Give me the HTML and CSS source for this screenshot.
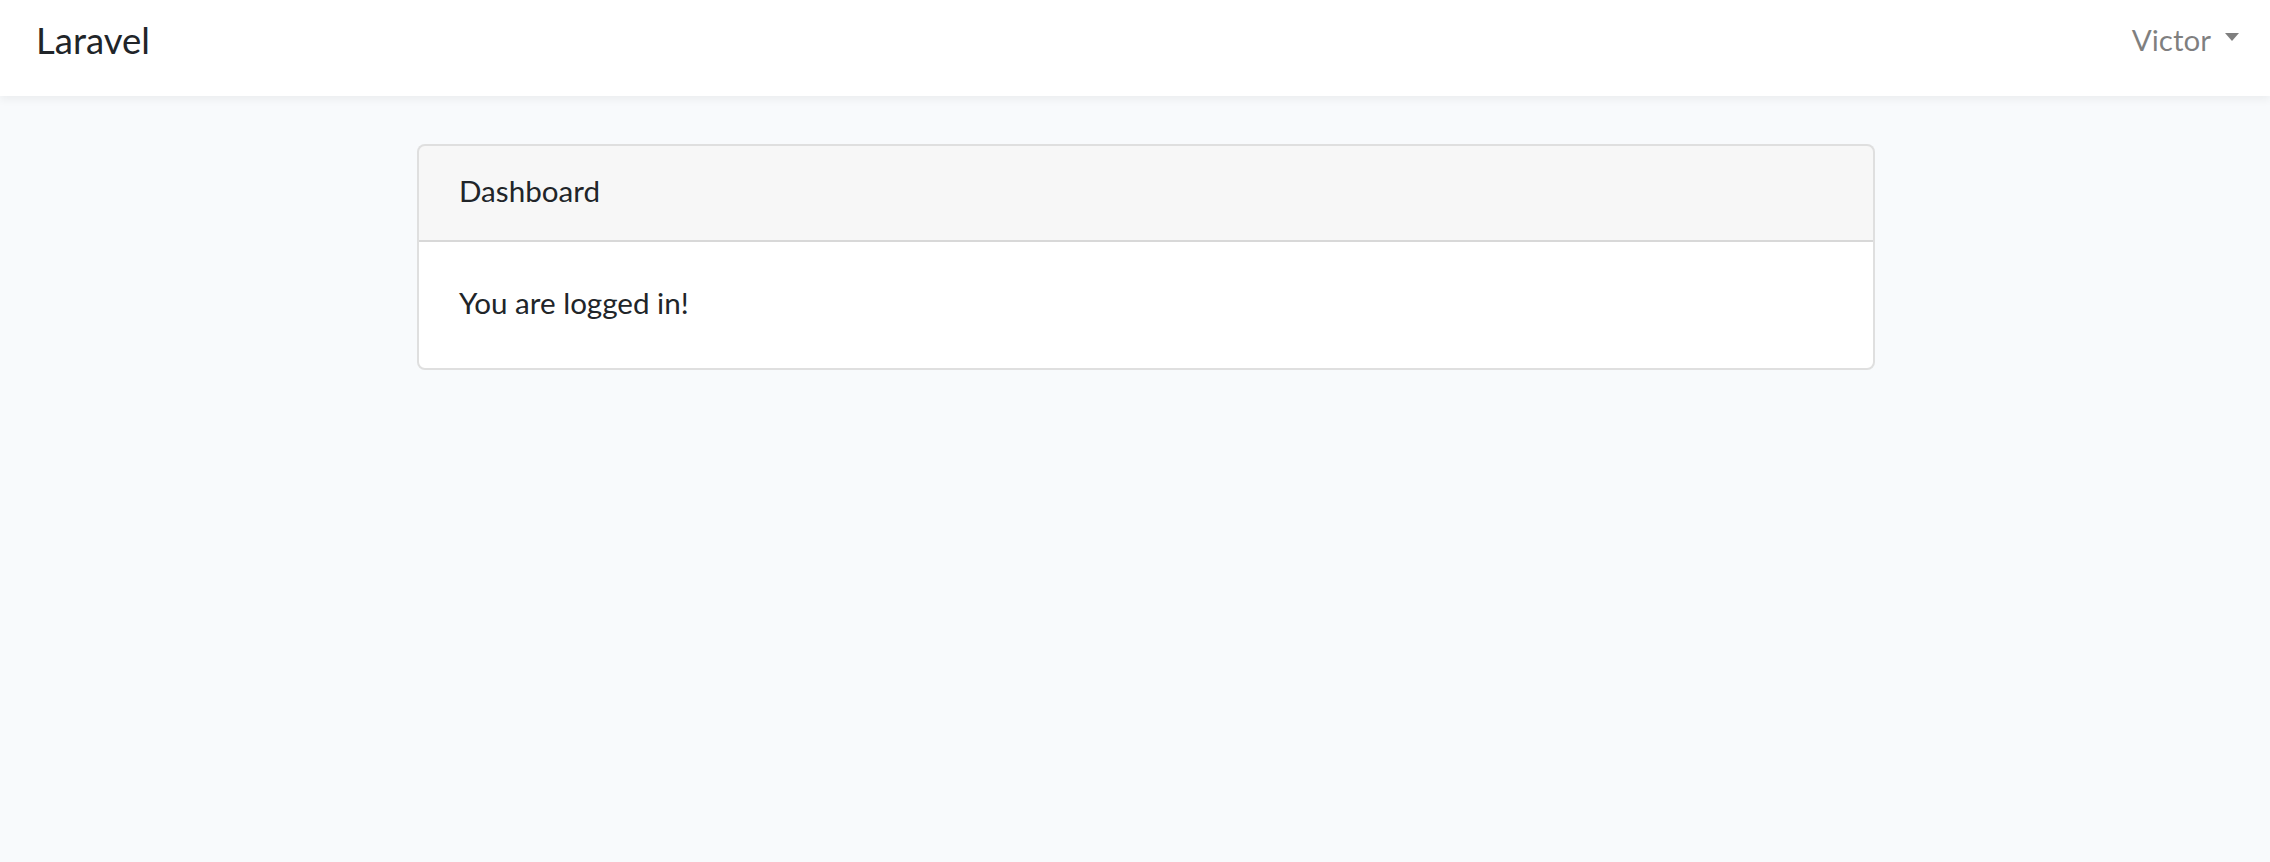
FILE: index.html
```html
<!DOCTYPE html>
<html>
<head>
<meta charset="utf-8">
<link rel="stylesheet" href="styles.css">
</head>
<body>
<nav class="navbar">
  <a class="brand">Laravel</a>
  <a class="user">Victor <span class="caret"></span></a>
</nav>
<main class="main">
  <div class="card">
    <div class="card-header">Dashboard</div>
    <div class="card-body">You are logged in!</div>
  </div>
</main>
</body>
</html>
```

FILE: styles.css
```css
html, body {
  margin: 0;
  padding: 0;
}
body {
  background: #f8fafc;
  font-family: "Lato", "Noto Sans", sans-serif;
  color: #212529;
  font-size: 29.6px;
  line-height: 46px;
}
.navbar {
  height: 96px;
  box-sizing: border-box;
  background: #fff;
  box-shadow: 0 4px 8px rgba(0, 0, 0, 0.05);
  display: flex;
  align-items: center;
  justify-content: space-between;
  padding: 0 31px 0 36px;
}
.brand {
  font-size: 36.5px;
  color: #212529;
  margin-top: -16px;
}
.user {
  color: rgba(0, 0, 0, 0.5);
  display: flex;
  align-items: center;
  gap: 14px;
  margin-top: -17px;
}
.caret {
  width: 0;
  height: 0;
  border-left: 7px solid transparent;
  border-right: 7px solid transparent;
  border-top: 8px solid rgba(0, 0, 0, 0.5);
  margin-top: -6px;
}
.main {
  padding: 48px 0 0 417px;
}
.card {
  width: 1458px;
  box-sizing: border-box;
  background: #fff;
  border: 2px solid rgba(0, 0, 0, 0.125);
  border-radius: 8px;
  overflow: hidden;
}
.card-header {
  background: rgba(0, 0, 0, 0.03);
  border-bottom: 2px solid rgba(0, 0, 0, 0.125);
  padding: 22px 40px 26px;
}
.card-body {
  padding: 38px 40px 42px;
}
```
